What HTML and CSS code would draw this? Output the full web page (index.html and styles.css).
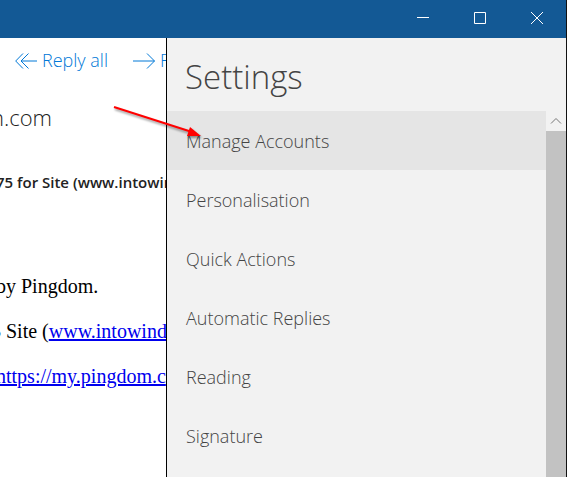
FILE: index.html
```html
<!DOCTYPE html>
<html lang="en">
<head>
  <meta charset="UTF-8" />
  <meta name="viewport" content="width=device-width, initial-scale=1" />
  <title>Mail - Settings</title>
  <link rel="stylesheet" href="styles.css">
</head>
<body>
  <header class="titlebar">
    <button class="window-btn" aria-label="Minimize">
      <svg width="12" height="12" viewBox="0 0 12 12"><path d="M0 5.5H12" /></svg>
    </button>
    <button class="window-btn" aria-label="Maximize">
      <svg width="12" height="12" viewBox="0 0 12 12"><path d="M.5 .5H11.5V11.5H.5Z" /></svg>
    </button>
    <button class="window-btn" aria-label="Close">
      <svg width="12" height="12" viewBox="0 0 12 12"><path d="M0 0L12 12M12 0L0 12" /></svg>
    </button>
  </header>

  <div class="content">
    <main class="mail">
      <div class="toolbar">
        <button class="tool-btn">
          <svg width="22" height="16" viewBox="0 0 22 16"><path d="M8 .5L.7 8L8 15.5M13.5 .5L6 8L13.5 15.5M6 8H22" /></svg>
          Reply all
        </button>
        <button class="tool-btn">
          <svg width="22" height="16" viewBox="0 0 22 16"><path d="M0 8H21.5M14 .5L21.5 8L14 15.5" /></svg>
          Forward
        </button>
      </div>
      <div class="message">
        <p class="sender clipped">n.com</p>
        <h2 class="subject">75 for Site (www.intowind</h2>
        <div class="message-body">
          <p>by Pingdom.</p>
          <p class="clipped">5 Site (<a href="#">www.intowind</a></p>
          <p><a href="#">https://my.pingdom.c</a></p>
        </div>
      </div>
    </main>

    <aside class="settings">
      <h1>Settings</h1>
      <div class="settings-scroll">
        <nav class="settings-list">
          <a class="active" href="#">Manage Accounts</a>
          <a href="#">Personalisation</a>
          <a href="#">Quick Actions</a>
          <a href="#">Automatic Replies</a>
          <a href="#">Reading</a>
          <a href="#">Signature</a>
        </nav>
        <div class="scrollbar">
          <button class="scroll-up" aria-label="Scroll up">
            <svg width="12" height="8" viewBox="0 0 12 8"><path d="M1 6.5L6 1.5L11 6.5" /></svg>
          </button>
          <div class="scroll-thumb"></div>
        </div>
      </div>
      <!-- arrow pointing at the first entry -->
      <svg class="pointer" width="92" height="40" viewBox="0 0 92 40">
        <path class="pointer-line" d="M2 4L80 29" />
        <path class="pointer-head" d="M78 24L89 33L75 33Z" />
      </svg>
    </aside>
  </div>
</body>
</html>
```

FILE: styles.css
```css
* {
  box-sizing: border-box;
}
body {
  margin: 0;
  height: 100vh;
  display: flex;
  flex-direction: column;
  overflow: hidden;
  background-color: #fff;
  border-right: 1px solid #111;
  font-family: "Open Sans", "Noto Sans", sans-serif;
}
h1,
h2,
p {
  margin: 0;
}
button {
  border: none;
  padding: 0;
  background: none;
  font-family: inherit;
  cursor: pointer;
}
svg {
  flex: none;
  fill: none;
  stroke: currentColor;
}

/* title bar */
.titlebar {
  flex: none;
  display: flex;
  justify-content: flex-end;
  height: 38px;
  padding-right: 1px;
  background-color: #135995;
}
.window-btn {
  display: flex;
  justify-content: center;
  align-items: center;
  width: 57px;
  height: 36px;
  color: #fff;
}
.content {
  flex: 1;
  display: flex;
  min-height: 0;
}

/* mail behind the settings panel */
.mail {
  flex: 1;
  min-width: 0;
  overflow: hidden;
  white-space: nowrap;
}
.toolbar {
  display: flex;
  gap: 25px;
  padding: 10px 0 0 15px;
}
.tool-btn {
  display: flex;
  align-items: center;
  gap: 5px;
  color: #0078d7;
  font-size: 18px;
  font-weight: 300;
  line-height: 25px;
}
.message {
  margin-left: -4px;
}
.clipped {
  margin-left: -5px;
}
.sender {
  padding-top: 29px;
  color: #222;
  font-size: 22px;
  font-weight: 300;
  line-height: 30px;
}
.subject {
  padding-top: 38px;
  color: #222;
  font-size: 15px;
  font-weight: 600;
  line-height: 24px;
}
.message-body {
  padding-top: 80px;
  font-family: "Liberation Serif", serif;
  font-size: 20px;
  line-height: 24px;
}
.message-body p {
  margin-bottom: 21px;
}
.message-body a {
  color: #0000ee;
}

/* settings panel */
.settings {
  position: relative;
  flex: none;
  display: flex;
  flex-direction: column;
  width: 400px;
  border-left: 1px solid #000;
  background-color: #f2f2f2;
  color: #444;
}
.settings h1 {
  padding: 15px 18px 10px;
  font-size: 33px;
  font-weight: 300;
  line-height: 48px;
}
.settings-scroll {
  flex: 1;
  display: flex;
  min-height: 0;
}
.settings-list {
  flex: 1;
  overflow: hidden;
}
.settings-list a {
  display: block;
  padding: 1px 19px 0;
  color: inherit;
  font-size: 18px;
  font-weight: 300;
  line-height: 58px;
  text-decoration: none;
}
.settings-list a.active,
.settings-list a:hover {
  background-color: #e5e5e5;
}
.scrollbar {
  display: flex;
  flex-direction: column;
  width: 20px;
}
.scroll-up {
  display: flex;
  justify-content: center;
  align-items: center;
  height: 20px;
  color: #777;
}
.scroll-thumb {
  flex: 1;
  background-color: #c2c2c2;
}

.pointer {
  position: absolute;
  top: 65px;
  left: -55px;
  filter: drop-shadow(1px 2px 1px rgba(0, 0, 0, 0.4));
  pointer-events: none;
}
.pointer-line {
  stroke: #f00;
  stroke-width: 2;
}
.pointer-head {
  fill: #f00;
  stroke: none;
}
```
